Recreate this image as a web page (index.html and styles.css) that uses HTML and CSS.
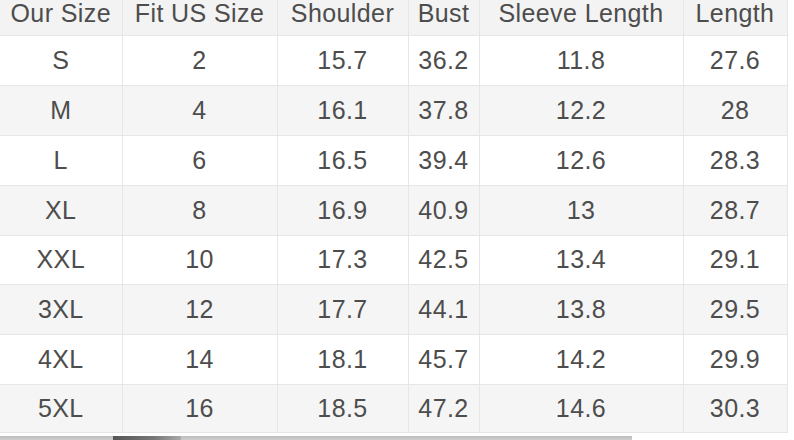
FILE: index.html
```html
<!DOCTYPE html>
<html>
<head>
<meta charset="utf-8">
<link rel="stylesheet" href="styles.css">
</head>
<body>
<div class="page">
  <table class="sizes">
    <colgroup>
      <col class="c1"><col class="c2"><col class="c3"><col class="c4"><col class="c5"><col class="c6">
    </colgroup>
    <thead>
      <tr><th>Our Size</th><th>Fit US Size</th><th>Shoulder</th><th>Bust</th><th>Sleeve Length</th><th>Length</th></tr>
    </thead>
    <tbody>
      <tr><td>S</td><td>2</td><td>15.7</td><td>36.2</td><td>11.8</td><td>27.6</td></tr>
      <tr><td>M</td><td>4</td><td>16.1</td><td>37.8</td><td>12.2</td><td>28</td></tr>
      <tr><td>L</td><td>6</td><td>16.5</td><td>39.4</td><td>12.6</td><td>28.3</td></tr>
      <tr><td>XL</td><td>8</td><td>16.9</td><td>40.9</td><td>13</td><td>28.7</td></tr>
      <tr><td>XXL</td><td>10</td><td>17.3</td><td>42.5</td><td>13.4</td><td>29.1</td></tr>
      <tr><td>3XL</td><td>12</td><td>17.7</td><td>44.1</td><td>13.8</td><td>29.5</td></tr>
      <tr><td>4XL</td><td>14</td><td>18.1</td><td>45.7</td><td>14.2</td><td>29.9</td></tr>
      <tr><td>5XL</td><td>16</td><td>18.5</td><td>47.2</td><td>14.6</td><td>30.3</td></tr>
    </tbody>
  </table>
  <div class="strip">
    <div class="bar"><span class="patch"></span></div>
  </div>
</div>
</body>
</html>
```

FILE: styles.css
```css
html, body {
  margin: 0;
  padding: 0;
  background: #ffffff;
}
.page {
  width: 794px;
  height: 440px;
  overflow: hidden;
  font-family: "Liberation Sans", Arial, sans-serif;
  color: #4d4d4d;
}
.sizes {
  border-collapse: collapse;
  table-layout: fixed;
  width: 787px;
  font-size: 25px;
  letter-spacing: 0.4px;
}
.c1 { width: 122px; }
.c2 { width: 155px; }
.c3 { width: 131px; }
.c4 { width: 71px; }
.c5 { width: 204px; }
.c6 { width: 104px; }
.sizes th,
.sizes td {
  border: 1px solid #e6e6e6;
  text-align: center;
  padding: 0;
  font-weight: normal;
  white-space: nowrap;
}
.sizes thead tr {
  height: 35px;
  background: #f3f3f3;
}
.sizes th {
  border-top: none;
  vertical-align: top;
  line-height: 24px;
  padding-top: 1px;
  padding-bottom: 9px;
}
.sizes tbody tr {
  height: 50px;
}
.sizes tbody tr:nth-child(5) { height: 49px; }
.sizes tbody tr:last-child { height: 48px; }
.sizes tbody tr:nth-child(even) {
  background: #f5f5f5;
}
.sizes th:first-child,
.sizes td:first-child { border-left: none; }
.strip {
  padding-top: 3px;
}
.bar {
  position: relative;
  width: 632px;
  height: 6px;
  background: linear-gradient(#bdbdbd, #d6d6d6);
}
.patch {
  position: absolute;
  left: 113px;
  top: 0;
  width: 68px;
  height: 6px;
  background: linear-gradient(90deg, #555, #777 60%, #aaa);
}
```
